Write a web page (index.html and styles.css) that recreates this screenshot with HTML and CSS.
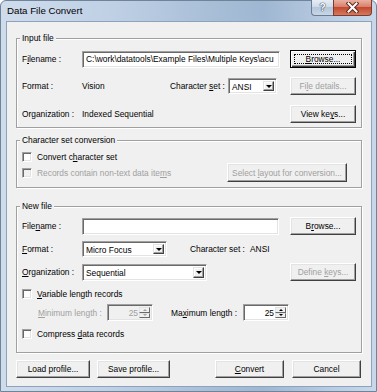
FILE: index.html
```html
<!DOCTYPE html>
<html lang="en">
<head>
  <meta charset="UTF-8" />
  <title>Data File Convert</title>
  <link rel="stylesheet" href="styles.css">
</head>
<body>
  <div class="window">
    <div class="titlebar">
      <span class="title">Data File Convert</span>
      <div class="caption">
        <span class="cap help">?</span>
        <span class="cap close">
          <svg width="13" height="11" viewBox="0 0 13 11">
            <path d="M2.5 1.5 L10.5 9.5 M10.5 1.5 L2.5 9.5" stroke="#5b2a22" stroke-width="4" stroke-linecap="square"/>
            <path d="M2.5 1.5 L10.5 9.5 M10.5 1.5 L2.5 9.5" stroke="#fff" stroke-width="2" stroke-linecap="square"/>
          </svg>
        </span>
      </div>
    </div>
    <div class="client">
      <!-- Input file -->
      <div class="group g-input">
        <span class="group-title">Input file</span>
        <div class="row">
          <span class="lbl">F<u>i</u>lename :</span>
          <div class="field w-path">C:\work\datatools\Example Files\Multiple Keys\acu</div>
          <div class="btn default"><span class="focus"><span><u>B</u>rowse...</span></span></div>
        </div>
        <div class="row r-gap9">
          <span class="lbl">Format :</span>
          <span class="val w-vision">Vision</span>
          <span class="lbl-cs">Character <u>s</u>et :</span>
          <div class="combo w-ansi"><span class="combo-val">ANSI</span><span class="arrow"></span></div>
          <div class="btn disabled"><span>Fi<u>l</u>e details...</span></div>
        </div>
        <div class="row r-gap10">
          <span class="lbl">Organization :</span>
          <span class="val">Indexed Sequential</span>
          <div class="btn"><span>View ke<u>y</u>s...</span></div>
        </div>
      </div>

      <!-- Character set conversion -->
      <div class="group g-charset">
        <span class="group-title">Character set conversion</span>
        <div class="row check-row">
          <span class="check"></span>
          <span>Convert c<u>h</u>aracter set</span>
        </div>
        <div class="row r-layout">
          <span class="check disabled"></span>
          <span class="muted">Records contain non-text data ite<u>m</u>s</span>
          <div class="btn disabled w-layout"><span>Select <u>l</u>ayout for conversion...</span></div>
        </div>
      </div>

      <!-- New file -->
      <div class="group g-new">
        <span class="group-title">New file</span>
        <div class="row">
          <span class="lbl">File<u>n</u>ame :</span>
          <div class="field w-newpath"></div>
          <div class="btn"><span>B<u>r</u>owse...</span></div>
        </div>
        <div class="row r-format">
          <span class="lbl"><u>F</u>ormat :</span>
          <div class="combo w-format"><span class="combo-val">Micro Focus</span><span class="arrow"></span></div>
          <span class="lbl-cs2">Character set :</span>
          <span>ANSI</span>
        </div>
        <div class="row r-org">
          <span class="lbl"><u>O</u>rganization :</span>
          <div class="combo w-org"><span class="combo-val">Sequential</span><span class="arrow"></span></div>
          <div class="btn disabled"><span>Define <u>k</u>eys...</span></div>
        </div>
        <div class="row check-row r-var">
          <span class="check"></span>
          <span><u>V</u>ariable length records</span>
        </div>
        <div class="row r-len">
          <span class="lbl-min muted"><u>M</u>inimum length :</span>
          <div class="spin disabled"><span class="spin-val">25</span><span class="spin-arrows"><span class="up"></span><span class="down"></span></span></div>
          <span class="lbl-max">Ma<u>x</u>imum length :</span>
          <div class="spin"><span class="spin-val">25</span><span class="spin-arrows"><span class="up"></span><span class="down"></span></span></div>
        </div>
        <div class="row check-row r-compress">
          <span class="check"></span>
          <span>Compress <u>d</u>ata records</span>
        </div>
      </div>

      <div class="footer">
        <div class="btn w-load"><span>Load profile...</span></div>
        <div class="btn w-save"><span>Save profile...</span></div>
        <div class="btn w-convert"><span><u>C</u>onvert</span></div>
        <div class="btn w-cancel"><span>Cancel</span></div>
      </div>
    </div>
  </div>
</body>
</html>
```

FILE: styles.css
```css
:root {
  --face: #f0f0f0;
  --light: #e3e3e3;
  --shadow: #a0a0a0;
  --dark: #696969;
  --darkest: #404040;
  --muted: #a0a0a0;
}
* { box-sizing: border-box; margin: 0; padding: 0; }
body {
  width: 377px;
  height: 392px;
  overflow: hidden;
  font-family: 'Liberation Sans', Arial, sans-serif;
  font-size: 8.4px;
  color: #000;
  background: #fff;
}
u { text-decoration: underline; text-underline-offset: 1px; }

/* window frame */
.window {
  width: 377px;
  height: 392px;
  padding: 0 4px 4px 5px;
  border: 1px solid #6f8399;
  border-radius: 6px 6px 0 0;
  background: linear-gradient(90deg, #cfdcec 0%, #bfd0e5 30%, #a9bfd8 55%, #9fb7d2 70%, #b9cce2 88%, #c8d8ea 100%);
}
.titlebar {
  height: 20px;
  display: flex;
  align-items: flex-start;
}
.title {
  font-size: 9.7px;
  line-height: 20px;
  padding-left: 1px;
  color: #000;
}
.caption {
  margin-left: auto;
  margin-top: -1px;
  display: flex;
}
.cap {
  height: 16px;
  display: flex;
  align-items: center;
  justify-content: center;
  border: 1px solid #6a7c92;
  border-top: none;
}
.help {
  width: 22px;
  border-radius: 0 0 0 4px;
  border-right: none;
  background: linear-gradient(#e6edf5, #cfdbe8 45%, #b5c6da 50%, #c9d7e6);
  color: #fff;
  font-weight: bold;
  font-size: 10px;
  text-shadow: 0 0 1px #3c4b5c, 0 0 1px #3c4b5c, 0 0 1px #3c4b5c;
}
.close {
  width: 39px;
  border-radius: 0 0 4px 0;
  border-color: #7d3a2d;
  background: linear-gradient(#eab0a2, #d8806b 45%, #c4492f 50%, #d27a5e);
}

/* client area */
.client {
  height: 366px;
  padding: 0 9px;
  background: var(--face);
  border: 1px solid #8ea3bb;
}

/* group boxes */
.group {
  position: relative;
  border: 1px solid #a0a0a0;
  box-shadow: inset 1px 1px #fff, 1px 1px #fff;
  padding: 10px 5px 0 5px;
}
.group-title {
  position: absolute;
  top: -6px;
  left: 3px;
  padding: 0 2px;
  line-height: 11px;
  background: var(--face);
}
.g-input { margin-top: 16px; height: 90px; padding-top: 11px; }
.g-charset { margin-top: 12px; height: 48px; padding-top: 11px; }
.g-new { margin-top: 18px; height: 147px; padding-top: 10px; }

.row {
  display: flex;
  align-items: center;
  height: 18px;
  white-space: nowrap;
}
.r-gap9 { margin-top: 9px; }
.r-gap10 { margin-top: 10px; }
.lbl { width: 60px; }
.val.w-vision { width: 88px; }
.lbl-cs { width: 58px; }
.lbl-cs2 { margin-left: 23px; width: 60px; }
.muted { color: var(--muted); }

/* classic 3d controls */
.btn {
  height: 18px;
  width: 66px;
  margin-left: auto;
  display: flex;
  align-items: center;
  justify-content: center;
  background: var(--face);
  border: 1px solid;
  border-color: #fff var(--darkest) var(--darkest) #fff;
  box-shadow: inset -1px -1px var(--shadow), inset 1px 1px var(--light);
}
.btn.disabled { color: var(--muted); }
.btn.default {
  border-color: #000;
  box-shadow: inset 1px 1px #fff, inset -1px -1px var(--darkest), inset -2px -2px var(--shadow);
  padding: 3px;
}
.btn.default .focus {
  flex: 1;
  align-self: stretch;
  display: flex;
  align-items: center;
  justify-content: center;
  border: 1px dotted #000;
}

.field, .combo, .spin {
  background: #fff;
  border: 1px solid;
  border-color: var(--shadow) #fff #fff var(--shadow);
  box-shadow: inset 1px 1px var(--dark), inset -1px -1px var(--light);
}
.field {
  height: 17px;
  line-height: 15px;
  padding-left: 3px;
  overflow: hidden;
}
.w-path { width: 198px; }
.w-newpath { width: 197px; }

.combo {
  height: 16px;
  display: flex;
  align-items: stretch;
  padding: 2px;
}
.combo-val { flex: 1; line-height: 12px; padding-left: 1px; }
.arrow {
  width: 11px;
  display: flex;
  align-items: center;
  justify-content: center;
  background: var(--face);
  border: 1px solid;
  border-color: var(--light) var(--darkest) var(--darkest) var(--light);
  box-shadow: inset -1px -1px var(--shadow), inset 1px 1px #fff;
}
.arrow::before {
  content: '';
  border-left: 3px solid transparent;
  border-right: 3px solid transparent;
  border-top: 3px solid #000;
}
.w-ansi { width: 49px; }
.w-format { width: 85px; }
.w-org { width: 125px; height: 17px; }

.r-format { margin-top: 5px; height: 18px; }
.r-org { margin-top: 5px; }

/* checkboxes */
.check-row { height: 10px; }
.check {
  width: 10px;
  height: 10px;
  margin-right: 5px;
  background: #fff;
  border: 1px solid;
  border-color: var(--shadow) #fff #fff var(--shadow);
  box-shadow: inset 1px 1px var(--dark), inset -1px -1px var(--light);
}
.check.disabled { background: var(--face); }
.r-layout { margin-top: 1px; height: 19px; }
.w-layout { width: 120px; height: 19px; margin-right: 9px; }
.r-var { margin-top: 8px; }

/* spin boxes */
.r-len { margin-top: 5px; height: 17px; }
.lbl-min { width: 85px; padding-left: 16px; }
.lbl-max { width: 72px; margin-left: 18px; }
.spin {
  width: 46px;
  height: 17px;
  display: flex;
  padding: 2px;
}
.spin.disabled { background: var(--face); color: var(--muted); }
.spin-val { flex: 1; text-align: right; line-height: 13px; padding-right: 1px; }
.spin-arrows { width: 11px; display: flex; flex-direction: column; }
.spin-arrows span {
  flex: 1;
  display: flex;
  align-items: center;
  justify-content: center;
  background: var(--face);
  border: 1px solid;
  border-color: var(--light) var(--dark) var(--dark) var(--light);
}
.spin-arrows .up::before {
  content: '';
  border-left: 2px solid transparent;
  border-right: 2px solid transparent;
  border-bottom: 2px solid #000;
}
.spin-arrows .down::before {
  content: '';
  border-left: 2px solid transparent;
  border-right: 2px solid transparent;
  border-top: 2px solid #000;
}
.spin.disabled .spin-arrows .up::before { border-bottom-color: var(--muted); }
.spin.disabled .spin-arrows .down::before { border-top-color: var(--muted); }
.r-compress { margin-top: 8px; }

/* footer */
.footer {
  display: flex;
  margin-top: 7px;
  height: 18px;
}
.footer .btn { margin-left: 0; }
.footer .w-load { width: 74px; }
.footer .w-save { width: 73px; margin-left: 7px; }
.footer .w-convert { width: 69px; margin-left: 45px; }
.footer .w-cancel { width: 69px; margin-left: 8px; }
```
